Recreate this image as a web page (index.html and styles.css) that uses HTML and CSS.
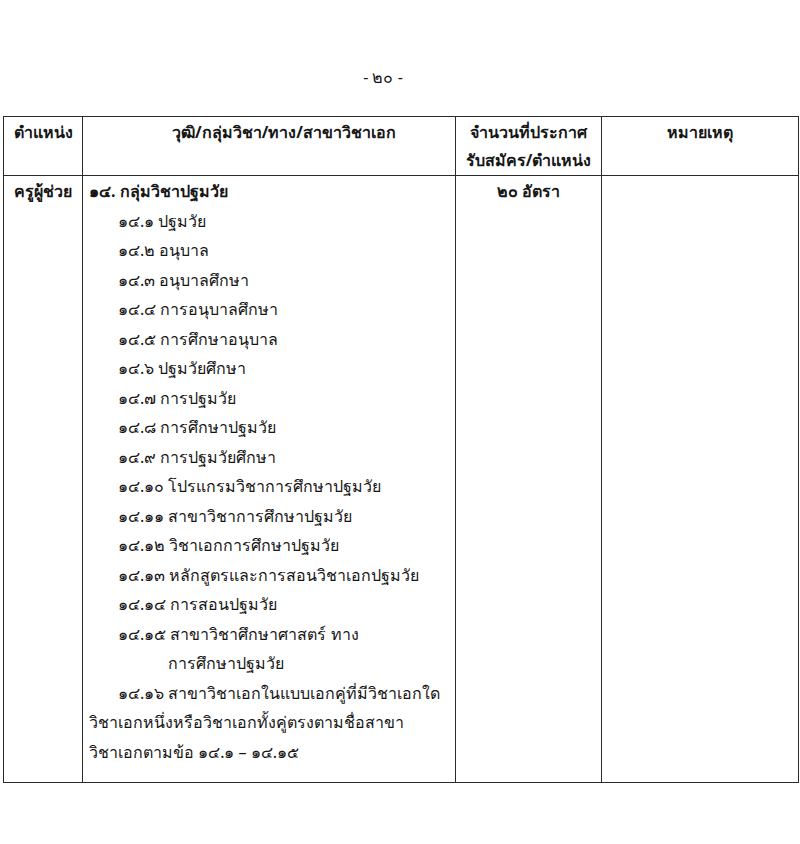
FILE: index.html
```html
<!DOCTYPE html>
<html lang="th">
<head>
<meta charset="utf-8">
<title>๒๐</title>
<link rel="stylesheet" href="styles.css">
</head>
<body>
<div class="page">
  <div class="page-no">- ๒๐ -</div>
  <table class="doc">
    <colgroup>
      <col class="c1"><col class="c2"><col class="c3"><col class="c4">
    </colgroup>
    <thead>
      <tr>
        <th class="h1">ตำแหน่ง</th>
        <th class="h2">วุฒิ/กลุ่มวิชา/ทาง/สาขาวิชาเอก</th>
        <th class="h3">จำนวนที่ประกาศ<br>รับสมัคร/ตำแหน่ง</th>
        <th class="h4">หมายเหตุ</th>
      </tr>
    </thead>
    <tbody>
      <tr>
        <td class="pos">ครูผู้ช่วย</td>
        <td class="subj">
          <div class="group">๑๔. กลุ่มวิชาปฐมวัย</div>
          <div class="item">๑๔.๑ ปฐมวัย</div>
          <div class="item">๑๔.๒ อนุบาล</div>
          <div class="item">๑๔.๓ อนุบาลศึกษา</div>
          <div class="item">๑๔.๔ การอนุบาลศึกษา</div>
          <div class="item">๑๔.๕ การศึกษาอนุบาล</div>
          <div class="item">๑๔.๖ ปฐมวัยศึกษา</div>
          <div class="item">๑๔.๗ การปฐมวัย</div>
          <div class="item">๑๔.๘ การศึกษาปฐมวัย</div>
          <div class="item">๑๔.๙ การปฐมวัยศึกษา</div>
          <div class="item">๑๔.๑๐ โปรแกรมวิชาการศึกษาปฐมวัย</div>
          <div class="item">๑๔.๑๑ สาขาวิชาการศึกษาปฐมวัย</div>
          <div class="item">๑๔.๑๒ วิชาเอกการศึกษาปฐมวัย</div>
          <div class="item">๑๔.๑๓ หลักสูตรและการสอนวิชาเอกปฐมวัย</div>
          <div class="item">๑๔.๑๔ การสอนปฐมวัย</div>
          <div class="item">๑๔.๑๕ สาขาวิชาศึกษาศาสตร์ ทาง</div>
          <div class="cont">การศึกษาปฐมวัย</div>
          <div class="item">๑๔.๑๖ สาขาวิชาเอกในแบบเอกคู่ที่มีวิชาเอกใด</div>
          <div class="wrap">วิชาเอกหนึ่งหรือวิชาเอกทั้งคู่ตรงตามชื่อสาขา</div>
          <div class="wrap">วิชาเอกตามข้อ ๑๔.๑ – ๑๔.๑๕</div>
        </td>
        <td class="num">๒๐ อัตรา</td>
        <td class="note"></td>
      </tr>
    </tbody>
  </table>
</div>
</body>
</html>
```

FILE: styles.css
```css
html, body {
  margin: 0;
  padding: 0;
  background: #ffffff;
}
body {
  font-family: "Noto Sans", "DejaVu Sans", sans-serif;
  color: #161616;
  font-size: 16px;
}
.page {
  width: 800px;
  height: 844px;
  padding-top: 64px;
  box-sizing: border-box;
}
.page-no {
  text-align: center;
  font-size: 16px;
  line-height: 26px;
  padding-right: 34px;
  height: 52px;
}
.doc {
  border-collapse: collapse;
  margin-left: 3px;
  width: 795px;
  table-layout: fixed;
}
.c1 { width: 79px; }
.c2 { width: 373px; }
.c3 { width: 146px; }
.c4 { width: 197px; }
.doc th,
.doc td {
  border: 1.5px solid #2a2a2a;
  vertical-align: top;
  padding: 0;
}
.doc th {
  font-weight: bold;
  line-height: 28px;
  height: 57px;
  padding-top: 1px;
  font-size: 16px;
  text-align: center;
}
.doc th.h2 {
  padding-left: 30px;
}
.doc td {
  line-height: 29.5px;
  height: 605px;
  padding-top: 1px;
}
.doc td.pos {
  font-weight: bold;
  text-align: center;
}
.doc td.subj {
  padding-left: 6px;
}
.group { font-weight: bold; }
.item { padding-left: 29px; }
.cont { padding-left: 79px; }
.wrap { padding-left: 0; }
.doc td.num {
  font-weight: bold;
  text-align: center;
}
```
